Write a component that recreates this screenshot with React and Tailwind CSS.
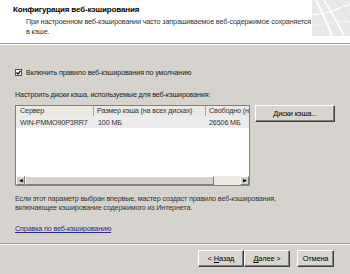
import React from "react";

const font = { fontFamily: '"Liberation Sans", Arial, sans-serif' };

const HeaderArt = () => (
  <svg width="38" height="36" viewBox="0 0 38 36" className="shrink-0">
    <rect x="0" y="0" width="38" height="36" fill="#e8e8e8" />
    <path d="M4 0 C10 12 16 24 20 36" stroke="#fff" strokeWidth="2" fill="none" />
    <path d="M12 0 C18 10 26 22 32 36" stroke="#fff" strokeWidth="1.5" fill="none" />
    <path d="M0 14 C10 16 22 10 38 4" stroke="#fff" strokeWidth="1.2" fill="none" />
    <path d="M0 26 C12 24 26 20 38 22" stroke="#f6f6f6" strokeWidth="1" fill="none" />
    <path d="M24 0 L38 18" stroke="#dadada" strokeWidth="1" fill="none" />
  </svg>
);

const Btn = ({ children, className = "" }) => (
  <div
    className={`flex h-[17px] items-center justify-center whitespace-nowrap border border-t-white border-l-white border-r-[#404040] border-b-[#404040] bg-[#d8d5cf] text-[7.4px] text-black shadow-[inset_-1px_-1px_0_#808080] ${className}`}
  >
    {children}
  </div>
);

export default function App() {
  return (
    <div
      className="flex h-[274px] w-[350px] flex-col overflow-hidden bg-[#d6d3ce] text-[7.2px] leading-[9px] tracking-[-0.15px] text-[#222]"
      style={font}
    >
      {/* Header */}
      <div className="flex h-[43px] shrink-0 justify-between bg-white">
        <div className="pl-[13px] pt-[5px]">
          <div className="text-[8px] font-bold leading-[10px] text-black">Конфигурация веб-кэширования</div>
          <div className="mt-[2px] whitespace-nowrap pl-[13px] leading-[10px] text-[#333]">
            При настроенном веб-кэшировании часто запрашиваемое веб-содержимое сохраняется
            <br />в кэше.
          </div>
        </div>
        <HeaderArt />
      </div>
      <div className="h-[1px] shrink-0 bg-[#a0a0a0]" />
      <div className="h-[1px] shrink-0 bg-white" />

      {/* Body */}
      <div className="flex flex-1 flex-col px-[15px]">
        <div className="mt-[23px] flex items-center gap-[4px]">
          <div className="flex h-[7px] w-[7px] items-center justify-center border border-[#555] bg-white">
            <svg width="5" height="5" viewBox="0 0 5 5">
              <path d="M0.5 2.5 L2 4 L4.5 0.8" stroke="#000" strokeWidth="1.2" fill="none" />
            </svg>
          </div>
          <span>Включить правило веб-кэширования по умолчанию</span>
        </div>

        <div className="mt-[13px]">Настроить диски кэша, используемые для веб-кэширования:</div>

        <div className="mt-[6px] flex items-start">
          {/* List view */}
          <div className="flex h-[81px] w-[236px] flex-col overflow-hidden whitespace-nowrap border border-[#808080] bg-white">
            <div className="flex h-[10px] shrink-0 items-center bg-[#ece9e2] text-[#333]">
              <div className="h-full w-[78px] shrink-0 overflow-hidden border-r border-[#a0a0a0] pl-[4px] leading-[10px]">Сервер</div>
              <div className="h-full w-[112px] shrink-0 overflow-hidden border-r border-[#a0a0a0] pl-[3px] leading-[10px]">
                Размер кэша (на всех дисках)
              </div>
              <div className="h-full min-w-0 flex-1 overflow-hidden pl-[3px] leading-[10px]">Свободно (на</div>
            </div>
            <div className="flex h-[12px] shrink-0 items-center bg-[#ececec] text-[#333]">
              <div className="w-[78px] shrink-0 overflow-hidden pl-[4px]">WIN-PMMO90P3RR7</div>
              <div className="w-[112px] shrink-0 pl-[4px]">100 МБ</div>
              <div className="min-w-0 flex-1 pl-[3px]">26506 МБ</div>
            </div>
            <div className="flex-1" />
            <div className="flex h-[9px] shrink-0 bg-[#ece9e2]">
              <div className="flex w-[9px] items-center justify-center border border-t-white border-l-white border-r-[#808080] border-b-[#808080] bg-[#d6d3ce] text-[5px] leading-none text-black">
                ◀
              </div>
              <div className="w-[189px] border border-t-white border-l-white border-r-[#808080] border-b-[#808080] bg-[#d6d3ce]" />
              <div className="flex-1" />
              <div className="flex w-[9px] items-center justify-center border border-t-white border-l-white border-r-[#808080] border-b-[#808080] bg-[#d6d3ce] text-[5px] leading-none text-black">
                ▶
              </div>
            </div>
          </div>
          <Btn className="ml-[5px] h-[15px] w-[80px]">Диски кэша...</Btn>
        </div>

        <div className="mt-[8px] whitespace-nowrap text-[#333]">
          Если этот параметр выбран впервые, мастер создаст правило веб-кэширования,
          <br />
          включающее кэширование содержимого из Интернета.
        </div>

        <div className="mt-[12px] text-[#2b2b9a] underline">Справка по веб-кэшированию</div>
      </div>

      {/* Footer */}
      <div className="h-[1px] shrink-0 bg-[#a0a0a0]" />
      <div className="h-[1px] shrink-0 bg-white" />
      <div className="flex h-[29px] shrink-0 items-center justify-end pb-[2px] pr-[16px]">
        <Btn className="w-[46px]">
          &lt; <span className="ml-[2px] underline">Н</span>азад
        </Btn>
        <Btn className="w-[46px]">
          <span className="underline">Д</span>алее &gt;
        </Btn>
        <Btn className="ml-[7px] w-[37px]">Отмена</Btn>
      </div>
    </div>
  );
}
